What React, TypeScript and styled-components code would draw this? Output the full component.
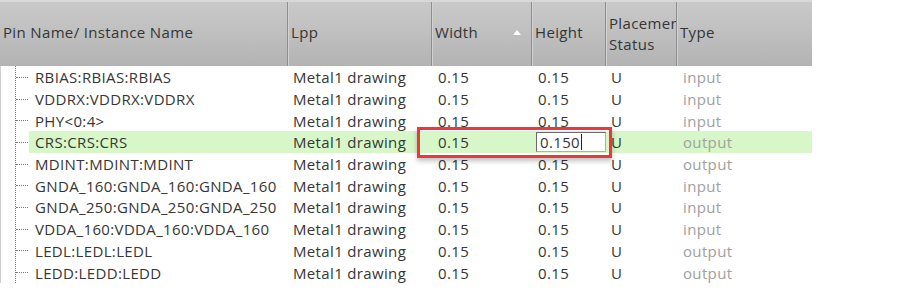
import React from "react";
import styled, { createGlobalStyle } from "styled-components";

const Global = createGlobalStyle`
  html, body { margin: 0; padding: 0; background: #ffffff; }
  body { font-family: "Open Sans", "DejaVu Sans", sans-serif; }
`;

const COLS = "287px 144px 100px 74px 71px 136px";

const Page = styled.div`
  width: 913px;
  height: 300px;
  background: #fff;
  overflow: hidden;
`;

const Table = styled.div`
  width: 812px;
  position: relative;
`;

const Header = styled.div`
  display: grid;
  grid-template-columns: ${COLS};
  height: 66px;
  background: linear-gradient(#c9c9c9 0%, #c1c1c1 40%, #b3b3b3 100%);
  border-top: 2px solid #d8d8d8;
  box-sizing: border-box;
`;

const HeadCell = styled.div<{ $first?: boolean; $multi?: boolean }>`
  position: relative;
  display: flex;
  align-items: center;
  padding-left: 3px;
  padding-bottom: ${(p) => (p.$multi ? 0 : 3)}px;
  font-size: 15px;
  letter-spacing: 0.35px;
  line-height: 21px;
  color: #353535;
  border-left: ${(p) => (p.$first ? "none" : "1px solid #8e8e8e")};
  box-shadow: ${(p) => (p.$first ? "none" : "inset 1px 0 0 #d2d2d2")};
  white-space: nowrap;
  overflow: hidden;
`;

const SortArrow = styled.span`
  position: absolute;
  right: 10px;
  top: 28px;
  width: 0;
  height: 0;
  border-left: 4px solid transparent;
  border-right: 4px solid transparent;
  border-bottom: 5px solid #ffffff;
`;

const Body = styled.div`
  position: relative;
  border-left: 1px solid #d0d0d0;
`;

const TreeLine = styled.div`
  position: absolute;
  left: 14px;
  top: 0;
  height: 217px;
  border-left: 1px dotted #7a7a7a;
`;

const Row = styled.div<{ $sel?: boolean }>`
  display: grid;
  grid-template-columns: ${COLS};
  height: 21.7px;
  align-items: center;
  font-size: 15px;
  letter-spacing: 0.35px;
  color: #363636;
  background: ${(p) => (p.$sel ? "linear-gradient(90deg, #ffffff 0, #ffffff 28px, #d7f7c8 28px)" : "transparent")};
`;

const NameCell = styled.div`
  display: flex;
  align-items: center;
  white-space: nowrap;
  padding-top: 1px;
`;

const Branch = styled.span`
  display: inline-block;
  width: 12px;
  margin-left: 15px;
  margin-right: 7px;
  border-top: 1px dotted #7a7a7a;
`;

const Cell = styled.div<{ $pad: number; $muted?: boolean }>`
  padding-left: ${(p) => p.$pad}px;
  padding-top: 1px;
  white-space: nowrap;
  color: ${(p) => (p.$muted ? "#a0a0a0" : "#363636")};
`;

const EditCell = styled.div`
  display: flex;
  align-items: center;
  padding-left: 4px;
`;

const EditFrame = styled.div`
  position: absolute;
  left: 416px;
  top: 61px;
  width: 195px;
  height: 31px;
  box-sizing: border-box;
  border: 3px solid #e8393c;
  box-shadow: 0 3px 5px rgba(0, 0, 0, 0.25);
  pointer-events: none;
`;

const EditInput = styled.div`
  width: 71px;
  height: 20px;
  box-sizing: border-box;
  background: #fff;
  border: 1px solid #6a6a6a;
  border-right-color: #b0b0b0;
  border-bottom-color: #b0b0b0;
  font-size: 15px;
  letter-spacing: 0.35px;
  line-height: 18px;
  color: #363636;
  padding-left: 3px;
  display: flex;
  align-items: center;
`;

const Caret = styled.span`
  display: inline-block;
  width: 1px;
  height: 16px;
  background: #222;
  margin-left: 1px;
`;

const rows = [
  ["RBIAS:RBIAS:RBIAS", "input"],
  ["VDDRX:VDDRX:VDDRX", "input"],
  ["PHY<0:4>", "input"],
  ["CRS:CRS:CRS", "output"],
  ["MDINT:MDINT:MDINT", "output"],
  ["GNDA_160:GNDA_160:GNDA_160", "input"],
  ["GNDA_250:GNDA_250:GNDA_250", "input"],
  ["VDDA_160:VDDA_160:VDDA_160", "input"],
  ["LEDL:LEDL:LEDL", "output"],
  ["LEDD:LEDD:LEDD", "output"],
];

export default function App() {
  return (
    <Page>
      <Global />
      <Table>
        <Header>
          <HeadCell $first>Pin Name/ Instance Name</HeadCell>
          <HeadCell>Lpp</HeadCell>
          <HeadCell>
            Width
            <SortArrow />
          </HeadCell>
          <HeadCell>Height</HeadCell>
          <HeadCell $multi>
            Placement
            <br />
            Status
          </HeadCell>
          <HeadCell>Type</HeadCell>
        </Header>
        <Body>
          <TreeLine />
          {rows.map(([name, type], i) => (
            <Row key={name} $sel={i === 3}>
              <NameCell>
                <Branch />
                {name}
              </NameCell>
              <Cell $pad={5}>Metal1 drawing</Cell>
              <Cell $pad={6}>0.15</Cell>
              {i === 3 ? (
                <EditCell>
                  <EditInput>
                    0.150
                    <Caret />
                  </EditInput>
                </EditCell>
              ) : (
                <Cell $pad={6}>0.15</Cell>
              )}
              <Cell $pad={5}>U</Cell>
              <Cell $pad={6} $muted>
                {type}
              </Cell>
            </Row>
          ))}
          <EditFrame />
        </Body>
      </Table>
    </Page>
  );
}
